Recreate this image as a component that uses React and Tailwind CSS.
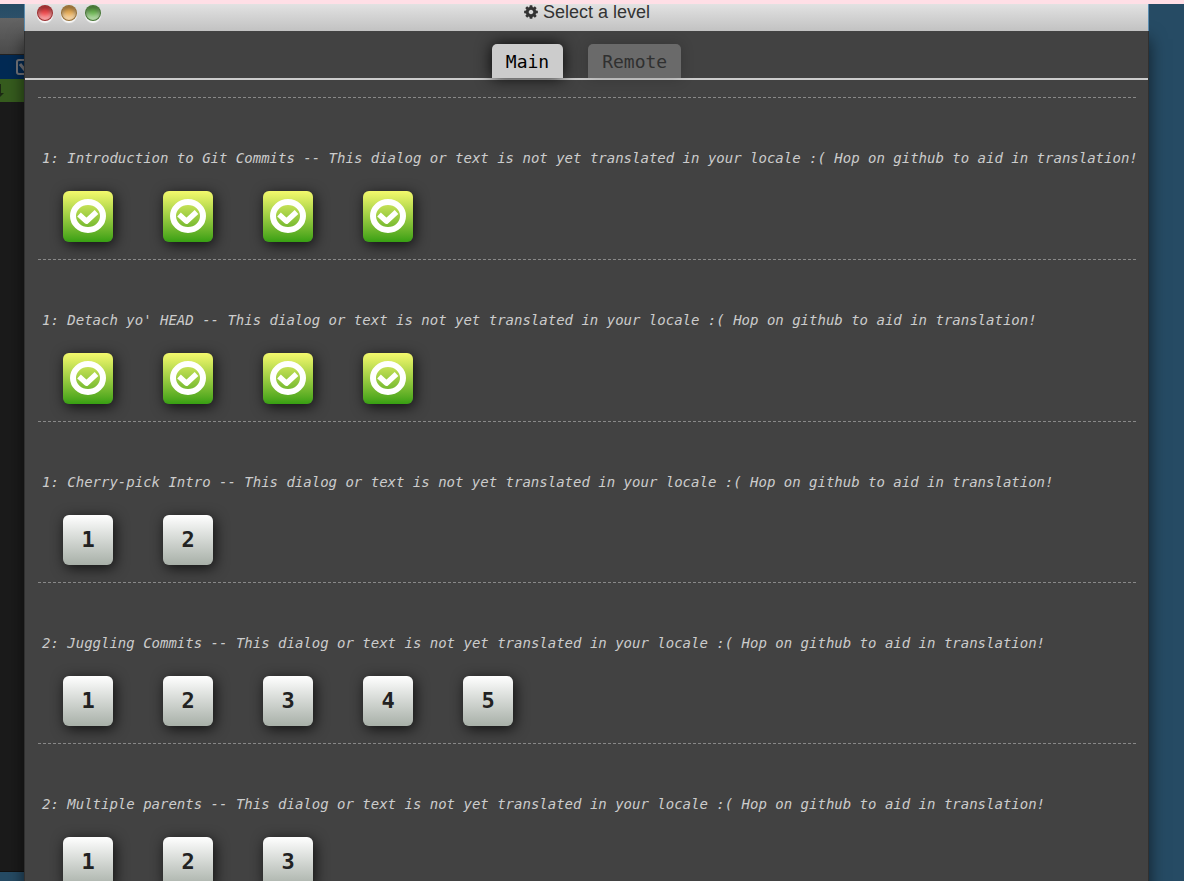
import React from "react";

const NOTE =
  "This dialog or text is not yet translated in your locale :( Hop on github to aid in translation!";

const SEQUENCES = [
  { title: "1: Introduction to Git Commits", count: 4, solved: true },
  { title: "1: Detach yo' HEAD", count: 4, solved: true },
  { title: "1: Cherry-pick Intro", count: 2, solved: false },
  { title: "2: Juggling Commits", count: 5, solved: false },
  { title: "2: Multiple parents", count: 3, solved: false },
];

function GearIcon() {
  return (
    <svg viewBox="0 0 1792 1792" className="size-4 fill-[#333]" aria-hidden="true">
      <path d="M1152 896q0-106-75-181t-181-75-181 75-75 181 75 181 181 75 181-75 75-181zm512-109v222q0 12-8 23t-20 13l-185 28q-19 54-39 91 35 50 107 138 10 12 10 25t-9 23q-27 37-99 108t-94 71q-12 0-26-9l-138-108q-44 23-91 38-16 136-29 186-7 28-36 28h-222q-14 0-24.5-8.5t-11.5-21.5l-28-184q-49-16-90-37l-141 107q-10 9-25 9-14 0-25-11-126-114-165-168-7-10-7-23 0-12 8-23 15-21 51-66.5t54-70.5q-27-50-41-99l-183-27q-13-2-21-12.5t-8-23.5v-222q0-12 8-23t19-13l186-28q14-46 39-92-40-57-107-138-10-12-10-24 0-10 9-23 26-36 98.5-107.5t94.5-71.5q13 0 26 10l138 107q44-23 91-38 16-136 29-186 7-28 36-28h222q14 0 24.5 8.5t11.5 21.5l28 184q49 16 90 37l142-107q9-9 24-9 13 0 25 10 129 119 165 170 7 8 7 22 0 12-8 23-15 21-51 66.5t-54 70.5q26 50 41 98l183 28q13 2 21 12.5t8 23.5z" />
    </svg>
  );
}

function SolvedIcon() {
  return (
    <svg viewBox="0 0 36 34" className="h-[34px] w-9" fill="none" stroke="#fff" aria-hidden="true">
      <ellipse cx="18" cy="17" rx="15" ry="14" strokeWidth="6" />
      <path d="M9 15.500l7.500 6.700L26.500 13" strokeWidth="5.4" strokeLinejoin="round" />
    </svg>
  );
}

function WindowButton({ label, color }) {
  return (
    <button
      type="button"
      aria-label={label}
      className={`size-4 rounded-full border border-black/35 shadow-[0_2px_1px_rgba(255,255,255,0.85),inset_0_3px_4px_rgba(0,0,0,0.4),inset_0_-4px_4px_rgba(255,255,255,0.5)] ${color}`}
    />
  );
}

function LevelButton({ number, solved }) {
  const look = solved
    ? "h-[51px] bg-linear-to-b from-[#f4f96c] to-[#36a012]"
    : "h-[50px] bg-linear-to-b from-white to-[#a8b0a8]";
  return (
    <button
      type="button"
      aria-label={`Level ${number}`}
      className={`flex w-[50px] items-center justify-center rounded-md pb-0.5 text-[22px] font-bold text-[#222] shadow-[2px_3px_14px_rgba(0,0,0,0.75)] ${look}`}
    >
      {solved ? <SolvedIcon /> : number}
    </button>
  );
}

function Sequence({ title, count, solved }) {
  return (
    <section className="border-t border-dashed border-[#888] pt-[50px] pb-[17px]">
      <h2 className="pl-1 text-[14px] leading-5 whitespace-nowrap text-[#ccc] italic">
        {title} -- {NOTE}
      </h2>
      <div className="mt-[23px] flex gap-[50px] pl-[25px]">
        {Array.from({ length: count }, (_, i) => (
          <LevelButton key={i} number={i + 1} solved={solved} />
        ))}
      </div>
    </section>
  );
}

function LeftBackdrop() {
  return (
    <div className="flex w-6 shrink-0 flex-col overflow-hidden bg-[#1b1b1b]">
      <div className="h-3.5 bg-linear-to-b from-[#264b64] to-[#2c5069]" />
      <div className="h-[37px] border-b border-[#222] bg-linear-to-b from-[#646464] to-[#4c4c4c]" />
      <div className="flex h-6 items-center bg-[#022a54] pl-4">
        <svg viewBox="0 0 16 16" className="size-4 shrink-0" fill="none" stroke="#77777c" strokeWidth="2" aria-hidden="true">
          <rect x="1" y="1" width="14" height="14" rx="2" />
          <path d="M4 5l4 5 6-7" strokeWidth="3" />
        </svg>
      </div>
      <div className="flex h-[23px] items-center bg-[#365c1e]">
        <svg viewBox="0 0 4 14" className="h-3.5 w-1" aria-hidden="true">
          <path d="M0 0h1v9h3L0 13z" fill="#1c2a14" />
        </svg>
      </div>
      <div className="flex-1" />
      <div className="h-2.5 border-t border-[#111] bg-[#264b64]" />
    </div>
  );
}

export default function App() {
  return (
    <div className="flex h-screen flex-col overflow-hidden bg-[#264b64]">
      <div className="h-1 shrink-0 bg-[#ffdfe6]" />
      <div className="flex min-h-0 flex-1">
        <LeftBackdrop />
        <main className="relative flex min-w-0 flex-1 flex-col font-['DejaVu_Sans_Mono',monospace]">
          <header className="z-10 grid h-[27px] shrink-0 grid-cols-[1fr_auto_1fr] border-x border-[#5b8caf] bg-linear-to-b from-[#e2e2e2] to-[#c2c2c2]">
            <div className="flex gap-2 pt-px pl-3">
              <WindowButton label="Close" color="bg-[#f0484b]" />
              <WindowButton label="Minimize" color="bg-[#e9ad55]" />
              <WindowButton label="Maximize" color="bg-[#6cb552]" />
            </div>
            <h1 className="flex h-4 items-center gap-1 font-['Liberation_Sans',Arial,sans-serif] text-[18px] leading-4 text-[#333]">
              <GearIcon />
              Select a level
            </h1>
          </header>
          <div className="flex-1 border-x border-[#303030] bg-[#424242] shadow-[0_8px_16px_rgba(0,0,0,0.6)]">
            <nav className="flex items-end justify-center gap-[25px] border-b-2 border-[#ccc] pt-[13px] text-[18px]">
              <button type="button" className="h-[34px] rounded-t-[5px] bg-[#ccc] px-3.5 text-black shadow-[0_0_16px_rgba(0,0,0,0.9)]">
                Main
              </button>
              <button type="button" className="h-[34px] rounded-t-[5px] bg-[#6a6a6a] px-3.5 text-[#303030] shadow-[0_0_14px_rgba(0,0,0,0.2)]">
                Remote
              </button>
            </nav>
            <div className="pt-[17px] pr-3 pl-[13px]">
              {SEQUENCES.map((s) => (
                <Sequence key={s.title} {...s} />
              ))}
            </div>
          </div>
        </main>
        <div className="w-[35px] shrink-0" />
      </div>
    </div>
  );
}
